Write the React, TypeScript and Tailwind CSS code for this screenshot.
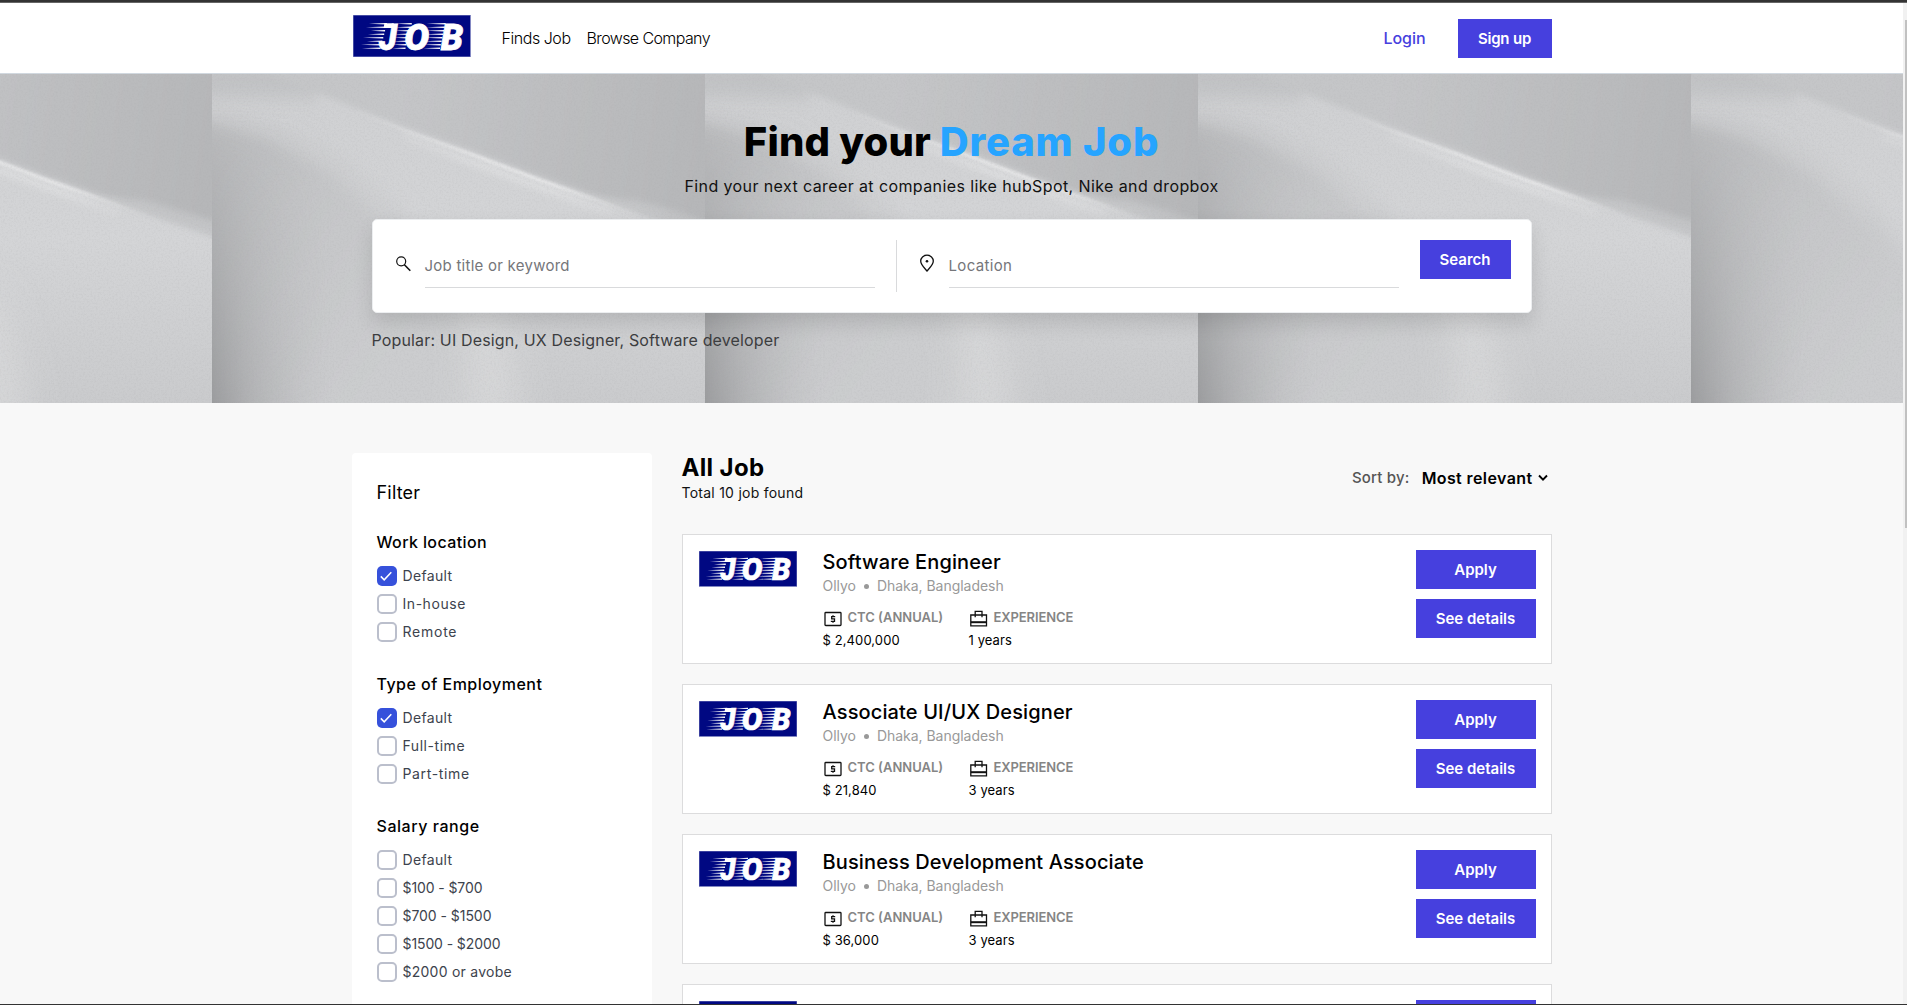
import React, { useState } from "react";

const stripeRows = [0, 1, 2, 3, 4, 5, 6, 7];

function Logo({ className }: { className: string }) {
  return (
    <svg className={`overflow-visible ${className}`} viewBox="0 0 118 42" preserveAspectRatio="none">
      <rect width="118" height="42" fill="#000882" />
      <rect x=".25" y=".25" width="117.5" height="41.5" fill="none" stroke="#8a8fc6" strokeWidth=".5" />
      <g fill="#fff">
        {stripeRows.map((i) => {
          const y = 8.6 + i * 3.5;
          const l = [16, 13, 18, 15, 10, 14, 8, 9][i];
          return (
            <g key={i}>
              <path d={`M${l} ${y + 0.2}L${34 - i * 0.9} ${y - 0.7}v1.7z`} />
              <path d={`M${43 - i * 0.5} ${y + 0.2}L${59 - i * 0.9} ${y - 0.7}v1.7z`} />
              <path d={`M${74 - i * 0.5} ${y + 0.2}L${93 - i * 0.8} ${y - 0.7}v1.7z`} />
            </g>
          );
        })}
      </g>
      <path d="M31.5 8.2H41L40 13H30.8Z" fill="#fff" />
      <g
        fill="#fff"
        stroke="#fff"
        strokeWidth=".8"
        fontFamily="Roboto, 'Liberation Sans', sans-serif"
        fontWeight="900"
        fontStyle="italic"
        fontSize="37"
      >
        <text x="26" y="34.6" textLength="18" lengthAdjust="spacingAndGlyphs">J</text>
        <text x="51.5" y="34.6" textLength="25" lengthAdjust="spacingAndGlyphs">O</text>
        <text x="88" y="34.6" textLength="22.5" lengthAdjust="spacingAndGlyphs">B</text>
      </g>
    </svg>
  );
}

function HeroBackdrop() {
  return (
    <svg className="absolute inset-0 h-full w-full" aria-hidden="true">
      <defs>
        <linearGradient id="base" x1="0" y1="0" x2="0" y2="1">
          <stop offset="0" stopColor="#cfd0d2" />
          <stop offset=".5" stopColor="#d4d5d7" />
          <stop offset="1" stopColor="#cacbcd" />
        </linearGradient>
        <linearGradient id="top" gradientUnits="userSpaceOnUse" x1="60" y1="0" x2="493" y2="60">
          <stop offset="0" stopColor="#c5c6c8" />
          <stop offset=".3" stopColor="#c5c6c8" />
          <stop offset=".65" stopColor="#bdbec0" />
          <stop offset="1" stopColor="#b6b7b9" />
        </linearGradient>
        <linearGradient id="side" x1="0" y1="0" x2="1" y2="0">
          <stop offset="0" stopColor="#88898b" stopOpacity=".7" />
          <stop offset=".35" stopColor="#939496" stopOpacity=".4" />
          <stop offset="1" stopColor="#b0b1b3" stopOpacity="0" />
        </linearGradient>
        <linearGradient id="fade" x1="0" y1="0" x2="0" y2="1">
          <stop offset=".1" stopColor="#fff" stopOpacity="0" />
          <stop offset=".35" stopColor="#fff" stopOpacity=".3" />
          <stop offset="1" stopColor="#fff" />
        </linearGradient>
        <linearGradient id="corner" x1="0" y1="0" x2="0" y2="1">
          <stop offset="0" stopColor="#bebfc1" />
          <stop offset=".6" stopColor="#c1c2c4" />
          <stop offset="1" stopColor="#cccdcf" stopOpacity=".2" />
        </linearGradient>
        <linearGradient id="lower" gradientUnits="userSpaceOnUse" x1="0" y1="60" x2="220" y2="220">
          <stop offset="0" stopColor="#bbbcbe" />
          <stop offset=".45" stopColor="#c5c6c8" />
          <stop offset="1" stopColor="#cccdcf" />
        </linearGradient>
        <linearGradient id="beam" gradientUnits="userSpaceOnUse" x1="140" y1="0" x2="430" y2="0">
          <stop offset="0" stopColor="#fff" stopOpacity="0" />
          <stop offset=".45" stopColor="#fff" stopOpacity=".42" />
          <stop offset=".7" stopColor="#fff" stopOpacity=".42" />
          <stop offset="1" stopColor="#fff" stopOpacity="0" />
        </linearGradient>
        <mask id="sideMask">
          <rect width="180" height="330" fill="url(#fade)" />
        </mask>
        <filter id="b1" x="-10%" y="-10%" width="120%" height="120%"><feGaussianBlur stdDeviation="1.2" /></filter>
        <filter id="b3" x="-10%" y="-10%" width="120%" height="120%"><feGaussianBlur stdDeviation="3" /></filter>
        <filter id="b6" x="-20%" y="-20%" width="140%" height="140%"><feGaussianBlur stdDeviation="6" /></filter>
        <filter id="b12" x="-30%" y="-30%" width="160%" height="160%"><feGaussianBlur stdDeviation="12" /></filter>
        <filter id="b18" x="-60%" y="-30%" width="220%" height="160%"><feGaussianBlur stdDeviation="16" /></filter>
        <filter id="grain" x="0" y="0" width="100%" height="100%">
          <feTurbulence type="fractalNoise" baseFrequency=".55" numOctaves="2" seed="4" />
          <feColorMatrix values="0 0 0 0 .35  0 0 0 0 .35  0 0 0 0 .36  .9 0 0 0 -.38" />
        </filter>
        <pattern id="tile" x="-281" y="0" width="493" height="330" patternUnits="userSpaceOnUse">
          <rect width="493" height="330" fill="url(#base)" />
          <path
            d="M-40 38L0 42L59 58L125 88L175 132L225 185L265 260L280 380H-40Z"
            fill="url(#lower)"
            filter="url(#b12)"
          />
          <path d="M-20 28L0 34L59 51L125 79L175 115V150L120 100L55 62L0 46L-20 44Z" fill="#d0d1d3" opacity=".4" filter="url(#b6)" />
          <rect x="-10" y="-10" width="115" height="46" fill="url(#corner)" opacity=".85" filter="url(#b6)" />
          <path
            d="M40 -30L62 3L119 24L192 53L259 77L325 102L379 121L425 136L492 158L540 175V-30Z"
            fill="url(#top)"
            filter="url(#b3)"
          />
          <path d="M370 122L425 139L492 163L540 180V162L492 146L425 126Z" fill="#c6c7c9" opacity=".8" filter="url(#b3)" />
          <path d="M192 62L259 88L325 112L400 138" stroke="url(#beam)" strokeWidth="7" fill="none" opacity=".6" filter="url(#b3)" />
          <path d="M119 27L192 56L259 80L325 105L379 124L430 142" stroke="url(#beam)" strokeWidth="3.5" fill="none" filter="url(#b1)" />
          <path d="M240 215Q265 280 250 350H312Q305 280 275 215Z" fill="#dbdcdd" opacity=".65" filter="url(#b18)" />
          <rect width="120" height="330" fill="url(#side)" mask="url(#sideMask)" />
        </pattern>
      </defs>
      <rect width="100%" height="100%" fill="url(#tile)" />
      <rect width="100%" height="100%" filter="url(#grain)" opacity=".35" />
    </svg>
  );
}

function SearchIcon() {
  return (
    <svg className="h-[18px] w-[18px]" viewBox="0 0 18 18" fill="none" stroke="#111" strokeWidth="1.2">
      <circle cx="6.2" cy="6.3" r="4.5" />
      <path d="M9.4 9.7L15.3 15.8" strokeWidth="1.6" />
    </svg>
  );
}

function PinIcon() {
  return (
    <svg className="h-[18px] w-4" viewBox="0 0 16 18" fill="none" stroke="#111" strokeWidth="1.3">
      <path d="M8 1.2C4.4 1.2 1.7 3.8 1.7 7.1C1.7 11 5.6 14.1 8 17C10.4 14.1 14.3 11 14.3 7.1C14.3 3.8 11.6 1.2 8 1.2Z" />
      <circle cx="8" cy="7.3" r="1.3" fill="#111" stroke="none" />
    </svg>
  );
}

function MoneyIcon() {
  return (
    <svg className="h-5 w-5" viewBox="0 0 20 20" fill="none" stroke="#111" strokeWidth="1.3">
      <rect x="2" y="5.5" width="16" height="13" rx=".8" />
      <path d="M12.2 9.7H8.7V11.9H11.5V14.3H7.8M10 8.2V9.6M10 14.3V15.7" strokeWidth="1.3" />
    </svg>
  );
}

function CaseIcon() {
  return (
    <svg className="h-5 w-5" viewBox="0 0 20 20" fill="none" stroke="#111" strokeWidth="1.3">
      <path d="M1.8 8H17.5V18.8H1.8ZM6.2 10.3V4.4H13V10.3" />
      <path d="M1.8 15.2H17.5" strokeWidth="2" />
    </svg>
  );
}

const buttonBase = "bg-[#4640de] text-center text-[15px] leading-[39px] font-semibold text-white h-[39px]";

type Item = { label: string; track: string };
type Group = { title: string; track: string; items: Item[]; initial: number };

const groups: Group[] = [
  {
    title: "Work location",
    track: "tracking-[0.38px]",
    items: [
      { label: "Default", track: "tracking-[0.35px]" },
      { label: "In-house", track: "tracking-[0.55px]" },
      { label: "Remote", track: "tracking-[0.75px]" },
    ],
    initial: 0,
  },
  {
    title: "Type of Employment",
    track: "tracking-[0.48px]",
    items: [
      { label: "Default", track: "tracking-[0.35px]" },
      { label: "Full-time", track: "tracking-[0.55px]" },
      { label: "Part-time", track: "tracking-[0.65px]" },
    ],
    initial: 0,
  },
  {
    title: "Salary range",
    track: "tracking-[0.55px]",
    items: [
      { label: "Default", track: "tracking-[0.35px]" },
      { label: "$100 - $700", track: "tracking-[-0.1px]" },
      { label: "$700 - $1500", track: "tracking-[-0.05px]" },
      { label: "$1500 - $2000", track: "tracking-[-0.1px]" },
      { label: "$2000 or avobe", track: "tracking-[0.25px]" },
    ],
    initial: -1,
  },
];

function FilterGroup({ group }: { group: Group }) {
  const [selected, setSelected] = useState(group.initial);
  return (
    <section className="mb-[30px]">
      <h3 className={`mb-3 text-base leading-6 font-medium text-black ${group.track}`}>{group.title}</h3>
      <ul className="flex flex-col gap-2">
        {group.items.map((item, i) => (
          <li key={item.label} className="flex h-5 cursor-pointer items-center gap-1.5" onClick={() => setSelected(i)}>
            {selected === i ? (
              <span className="flex size-5 items-center justify-center rounded-[5px] bg-[#3651db]">
                <svg className="size-5" viewBox="0 0 20 20" fill="none" stroke="#fff" strokeWidth="1.5">
                  <path d="M3.8 10.4L7.2 13.8L14.3 6.3" />
                </svg>
              </span>
            ) : (
              <span className="size-5 rounded-[5px] border-2 border-[#bbbfcc] bg-white" />
            )}
            <span className={`text-sm leading-5 whitespace-nowrap text-[#3d434d] ${item.track}`}>{item.label}</span>
          </li>
        ))}
      </ul>
    </section>
  );
}

const jobs = [
  { title: "Software Engineer", salary: "2,400,000", years: 1 },
  { title: "Associate UI/UX Designer", salary: "21,840", years: 3 },
  { title: "Business Development Associate", salary: "36,000", years: 3 },
  { title: "", salary: "48,000", years: 4 },
];

function JobCard({ job }: { job: (typeof jobs)[number] }) {
  return (
    <article className="flex h-[130px] shrink-0 border border-[#dcdcdd] bg-white pr-[15px] pl-4">
      <Logo className="mt-4 h-[35.5px] w-[98px] shrink-0" />
      <div className="ml-[26px] grow pt-[13px]">
        <h2 className="h-7 text-xl leading-7 font-medium tracking-[0.13px] text-black">{job.title}</h2>
        <p className="flex h-5 items-center text-sm leading-5 tracking-[-0.03px] text-[#999]">
          Ollyo
          <span className="mx-2 size-[5px] rounded-full bg-[#999]" />
          Dhaka, Bangladesh
        </p>
        <div className="mt-[11px] flex">
          <div className="w-[146px]">
            <p className="flex h-5 items-center gap-[5px] text-[13px] leading-5 font-semibold text-[#858585]">
              <MoneyIcon />
              CTC (ANNUAL)
            </p>
            <p className="mt-[3px] text-[13px] leading-5 tracking-[0.1px] text-black">$ {job.salary}</p>
          </div>
          <div>
            <p className="flex h-5 items-center gap-[5px] text-[13px] leading-5 font-semibold tracking-[-0.1px] text-[#858585]">
              <CaseIcon />
              EXPERIENCE
            </p>
            <p className="mt-[3px] text-[13px] leading-5 tracking-[0.1px] text-black">{job.years} years</p>
          </div>
        </div>
      </div>
      <div className="flex flex-col gap-2.5 pt-[15px]">
        <button className={`${buttonBase} w-[120px]`}>Apply</button>
        <button className={`${buttonBase} w-[120px]`}>See details</button>
      </div>
    </article>
  );
}

export default function App() {
  return (
    <div className="flex h-[1005px] w-[1907px] flex-col overflow-hidden bg-[#f8f8f8] font-['Inter','Liberation_Sans',sans-serif]">
      <div className="h-[3px] shrink-0 border-b border-[#666] bg-[#333]" />
      <div className="flex min-h-0 grow">
        <div className="flex w-[1903px] flex-col overflow-hidden">
          <header className="h-[71px] shrink-0 border-b border-[#d1d8df] bg-white">
            <div className="mx-auto flex w-[1200px] items-start">
              <Logo className="mt-3 ml-[1.5px] h-[42px] w-[117.5px]" />
              <nav className="mt-[23px] ml-[31px] flex gap-4 text-base leading-6 font-light text-black">
                <a className="w-[69px] whitespace-nowrap tracking-[-0.45px]">Finds Job</a>
                <a className="whitespace-nowrap tracking-[-0.6px]">Browse Company</a>
              </nav>
              <a className="mt-[23px] ml-auto text-base leading-6 font-medium tracking-[-0.05px] text-[#4640de]">Login</a>
              <button className={`${buttonBase} mt-4 ml-8 w-[94px] tracking-[-0.2px]`}>Sign up</button>
            </div>
          </header>

          <section className="relative h-[329px] shrink-0">
            <HeroBackdrop />
            <div className="relative mx-auto flex w-[1160px] flex-col items-center">
              <h1 className="mt-[43px] text-[40px] leading-[50px] font-extrabold whitespace-nowrap text-black">
                <span className="tracking-[0.2px]">Find your</span>{" "}
                <span className="tracking-[0.8px] text-[#26a4ff]">Dream Job</span>
              </h1>
              <p className="mt-[7px] text-base leading-6 tracking-[0.4px] whitespace-nowrap text-[#111]">
                Find your next career at companies like hubSpot, Nike and dropbox
              </p>
              <form className="mt-[21px] flex h-[94px] w-full rounded-[5px] border border-[#eceef0] bg-white pt-5 pl-[22px] shadow-[0_10px_20px_rgba(0,0,0,0.12)]">
                <span className="mt-[15px] w-[30px] shrink-0"><SearchIcon /></span>
                <div className="h-12 w-[450px] border-b border-[#d9dadc] pt-[14px] text-[15px] leading-6 tracking-[0.25px] text-[#75767a]">
                  Job title or keyword
                </div>
                <span className="mr-[22px] ml-[21px] h-[52px] w-px bg-[#d9dadc]" />
                <span className="mt-[14px] w-[30px] shrink-0"><PinIcon /></span>
                <div className="h-12 w-[450px] border-b border-[#d9dadc] pt-[14px] text-[15px] leading-6 tracking-[0.35px] text-[#75767a]">
                  Location
                </div>
                <button type="button" className={`${buttonBase} ml-[21px] w-[91px]`}>Search</button>
              </form>
              <p className="mt-[15px] self-start text-base leading-6 tracking-[0.15px] whitespace-nowrap text-[#3c3d3f]">
                Popular: UI Design, UX Designer, Software developer
              </p>
            </div>
          </section>

          <main className="mx-auto mt-[50px] flex min-h-0 w-[1200px] grow gap-[30px]">
            <aside className="w-[300px] shrink-0 overflow-hidden rounded-t bg-white px-[25px] pt-[26px]">
              <h2 className="mb-[23px] text-lg leading-7 font-normal tracking-[0.2px] text-black">Filter</h2>
              {groups.map((g) => (
                <FilterGroup key={g.title} group={g} />
              ))}
            </aside>
            <div className="flex grow flex-col">
              <div className="flex h-[50px] shrink-0 justify-between">
                <div>
                  <h1 className="text-2xl leading-[30px] font-bold tracking-[0.35px] text-black">All Job</h1>
                  <p className="text-sm leading-5 tracking-[0.25px] text-[#111]">Total 10 job found</p>
                </div>
                <div className="mt-[13px] flex h-6 items-center leading-6 font-medium whitespace-nowrap">
                  <span className="text-[15px] tracking-[0.2px] text-[#555]">Sort by:</span>
                  <span className="ml-3 text-base font-semibold tracking-[0.4px] text-black">Most relevant</span>
                  <svg className="mr-1 ml-[5px] h-2.5 w-2.5" viewBox="0 0 10 10" fill="none" stroke="#000" strokeWidth="1.9">
                    <path d="M1 2.5L5 6.6L9 2.5" />
                  </svg>
                </div>
              </div>
              <div className="mt-[31px] flex min-h-0 grow flex-col gap-5 overflow-hidden">
                {jobs.map((job, i) => (
                  <JobCard key={i} job={job} />
                ))}
              </div>
            </div>
          </main>
        </div>
        <div className="flex w-1 flex-col items-end bg-[#f1f1f1] pt-[17px]">
          <div className="h-[508px] w-[2px] bg-[#c1c1c1]" />
        </div>
      </div>
      <div className="h-px shrink-0 bg-[#333]" />
    </div>
  );
}
